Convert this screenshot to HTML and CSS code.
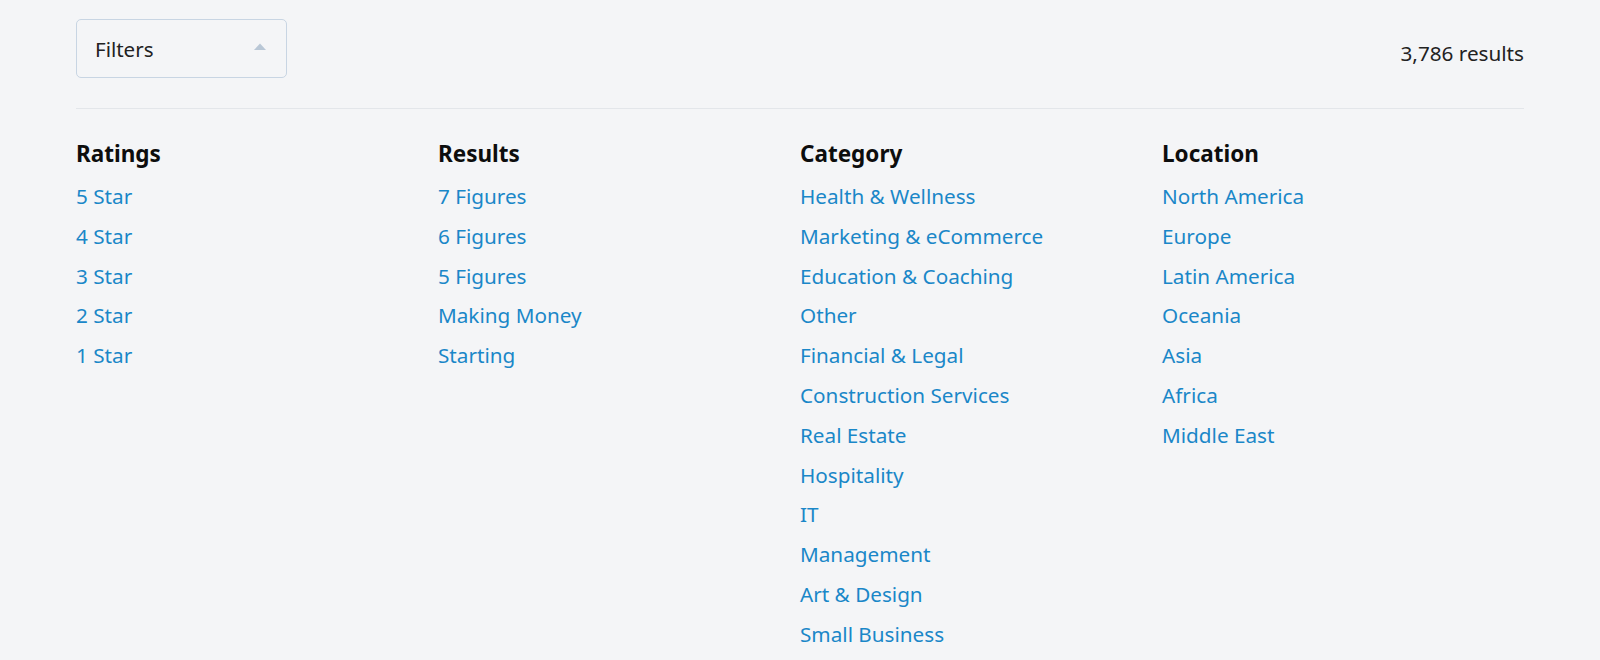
FILE: index.html
```html
<!DOCTYPE html>
<html lang="en">
<head>
<meta charset="utf-8">
<title>Filters</title>
<link rel="stylesheet" href="styles.css">
</head>
<body>
<div class="container">
  <div class="topbar">
    <button class="filter-btn" type="button">
      <span>Filters</span>
      <svg class="caret" width="12" height="7" viewBox="0 0 12 7"><path d="M0 7 L6 0.5 L12 7 Z" fill="#b9c7d6"/></svg>
    </button>
    <div class="count">3,786 results</div>
  </div>
  <div class="columns">
    <div class="col">
      <h3>Ratings</h3>
      <ul>
        <li><a href="#">5 Star</a></li>
        <li><a href="#">4 Star</a></li>
        <li><a href="#">3 Star</a></li>
        <li><a href="#">2 Star</a></li>
        <li><a href="#">1 Star</a></li>
      </ul>
    </div>
    <div class="col">
      <h3>Results</h3>
      <ul>
        <li><a href="#">7 Figures</a></li>
        <li><a href="#">6 Figures</a></li>
        <li><a href="#">5 Figures</a></li>
        <li><a href="#">Making Money</a></li>
        <li><a href="#">Starting</a></li>
      </ul>
    </div>
    <div class="col">
      <h3>Category</h3>
      <ul>
        <li><a href="#">Health &amp; Wellness</a></li>
        <li><a href="#">Marketing &amp; eCommerce</a></li>
        <li><a href="#">Education &amp; Coaching</a></li>
        <li><a href="#">Other</a></li>
        <li><a href="#">Financial &amp; Legal</a></li>
        <li><a href="#">Construction Services</a></li>
        <li><a href="#">Real Estate</a></li>
        <li><a href="#">Hospitality</a></li>
        <li><a href="#">IT</a></li>
        <li><a href="#">Management</a></li>
        <li><a href="#">Art &amp; Design</a></li>
        <li><a href="#">Small Business</a></li>
      </ul>
    </div>
    <div class="col">
      <h3>Location</h3>
      <ul>
        <li><a href="#">North America</a></li>
        <li><a href="#">Europe</a></li>
        <li><a href="#">Latin America</a></li>
        <li><a href="#">Oceania</a></li>
        <li><a href="#">Asia</a></li>
        <li><a href="#">Africa</a></li>
        <li><a href="#">Middle East</a></li>
      </ul>
    </div>
  </div>
</div>
</body>
</html>
```

FILE: styles.css
```css
html, body {
  margin: 0;
  padding: 0;
  background: #f4f5f7;
  font-family: "Noto Sans", "Open Sans", sans-serif;
  color: #1d1d1f;
}

.container {
  width: 1448px;
  margin: 0 auto;
}

.topbar {
  display: flex;
  justify-content: space-between;
  align-items: flex-start;
  padding-top: 19px;
  padding-bottom: 30px;
  border-bottom: 1px solid #e3e6ea;
}

.filter-btn {
  box-sizing: border-box;
  width: 211px;
  height: 59px;
  display: flex;
  align-items: center;
  justify-content: space-between;
  padding: 0 20px 0 18px;
  background: #f4f5f7;
  border: 1px solid #c8d5e3;
  border-radius: 5px;
  font-family: inherit;
  font-size: 20.5px;
  color: #222;
  cursor: pointer;
}

.caret {
  display: block;
  margin-top: -4px;
}

.count {
  font-size: 20.7px;
  color: #222;
  line-height: 30px;
  margin-top: 19px;
}

.columns {
  display: grid;
  grid-template-columns: repeat(4, 1fr);
  padding-top: 30px;
}

.col h3 {
  margin: 0;
  font-size: 22.5px;
  font-weight: 700;
  line-height: 30px;
  color: #0d0d0d;
}

.col ul {
  list-style: none;
  margin: 8px 0 0;
  padding: 0;
}

.col li {
  line-height: 39.8px;
  font-size: 20.7px;
}

.col a {
  color: #1a87c8;
  text-decoration: none;
}
```
